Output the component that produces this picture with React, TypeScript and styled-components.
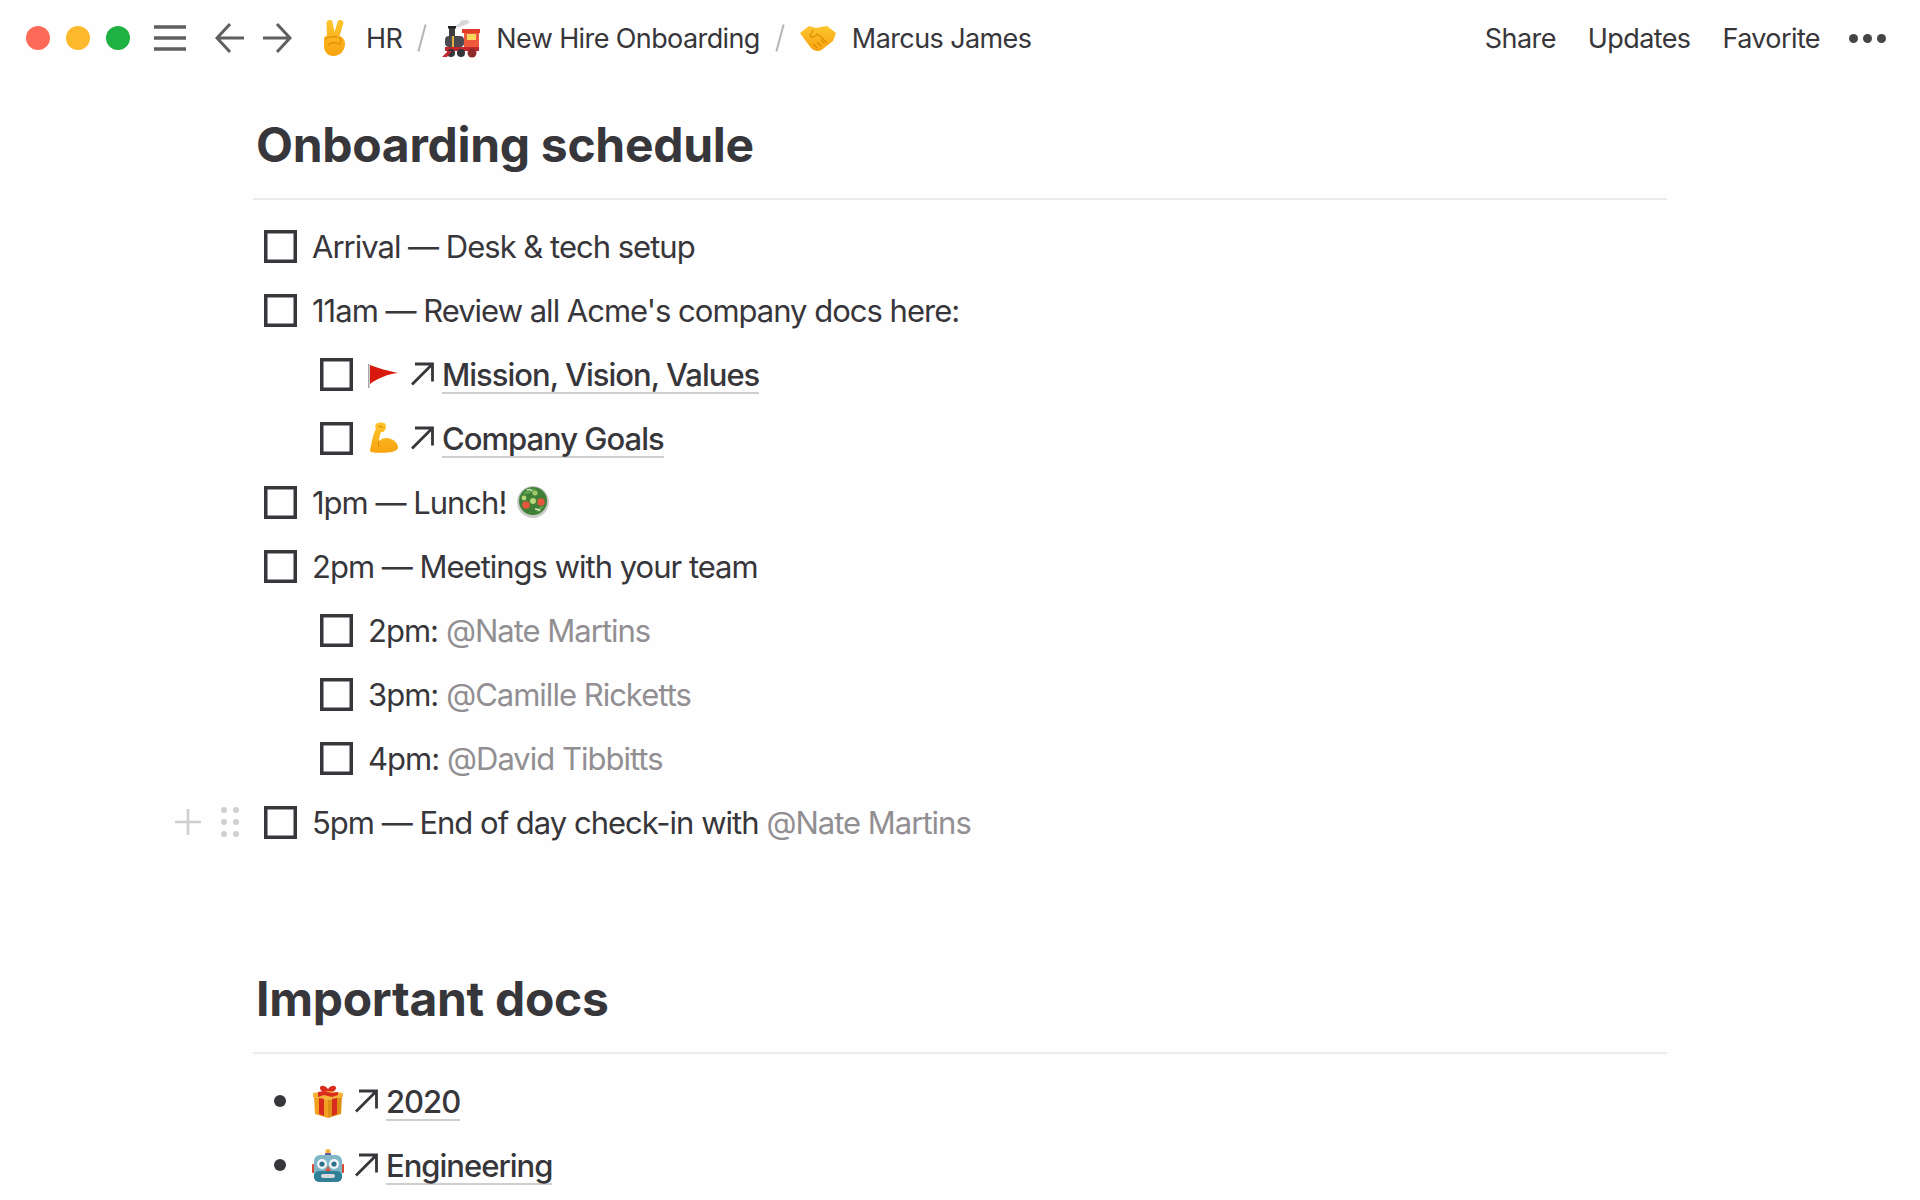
import * as React from "react";
import styled, { createGlobalStyle } from "styled-components";

const GlobalStyle = createGlobalStyle`
  html, body {
    margin: 0;
    padding: 0;
    background: #fffefe;
    overflow: hidden;
  }
  body {
    font-family: Inter, "Liberation Sans", sans-serif;
    color: #37363a;
  }
`;

const Page = styled.div`
  width: 1920px;
  height: 1200px;
  overflow: hidden;
`;

const TopBar = styled.header`
  height: 76px;
  display: flex;
  align-items: center;
  padding: 0 34px 0 26px;
  font-size: 27px;
  letter-spacing: -0.6px;
`;

const TrafficLights = styled.div`
  display: flex;
  gap: 16px;
  margin-right: 23px;
`;

const Light = styled.span<{ $color: string }>`
  width: 24px;
  height: 24px;
  border-radius: 50%;
  background: ${(p) => p.$color};
`;

const NavIcon = styled.svg<{ $gap?: number }>`
  display: block;
  flex: none;
  margin-right: ${(p) => p.$gap ?? 0}px;
  color: #5f5f62;
`;

const Crumb = styled.span`
  display: inline-flex;
  align-items: center;
  gap: 16px;
  white-space: nowrap;
`;

const Slash = styled.span`
  width: 2px;
  height: 28px;
  margin: 0 19px 0 19px;
  background: #b5b5b7;
  transform: rotate(15deg);
`;

const RightActions = styled.nav`
  margin-left: auto;
  display: flex;
  align-items: center;
  gap: 32px;
`;

const Dots = styled.span`
  display: flex;
  gap: 5px;
  margin-left: -3px;
`;

const Dot = styled.span`
  width: 9px;
  height: 9px;
  border-radius: 50%;
  background: #454548;
`;

const Content = styled.main`
  width: 1414px;
  margin-left: 253px;
`;

const Heading = styled.h1<{ $top: number }>`
  margin: ${(p) => p.$top}px 0 0;
  padding: 0 0 24px 3px;
  height: 59px;
  font-size: 48px;
  line-height: 59px;
  font-weight: 700;
  letter-spacing: -0.3px;
  box-sizing: content-box;
  border-bottom: 2px solid #ebebeb;
`;

const List = styled.ul<{ $top: number }>`
  list-style: none;
  margin: ${(p) => p.$top}px 0 0;
  padding: 0;
`;

const Row = styled.li<{ $indent?: boolean }>`
  position: relative;
  height: 64px;
  display: flex;
  align-items: center;
  padding-left: ${(p) => (p.$indent ? 67 : 11)}px;
  font-size: 31px;
  letter-spacing: -1px;
  white-space: nowrap;
`;

const CheckBox = styled.span`
  flex: none;
  width: 33px;
  height: 33px;
  box-sizing: border-box;
  border: 3px solid #37363a;
  box-shadow: inset 0 0 0 0.5px #37363a;
  margin-right: 15px;
`;

const Bullet = styled.span`
  flex: none;
  width: 12px;
  height: 12px;
  border-radius: 50%;
  margin: 0 26px 0 10px;
  background: #37363a;
`;

const Mention = styled.span`
  color: #918f92;
  margin-left: 8px;
`;

const PageLink = styled.span`
  font-weight: 500;
  padding-bottom: 1px;
  margin-top: 4px;
  border-bottom: 2px solid #cfcfd0;
  line-height: 32px;
`;

const LinkArrow = styled.svg`
  flex: none;
  display: block;
  margin: 0 8px 0 10px;
  color: #37363a;
`;

const InlineEmoji = styled.svg<{ $left?: number; $right?: number }>`
  flex: none;
  display: block;
  margin-left: ${(p) => p.$left ?? 0}px;
  margin-right: ${(p) => p.$right ?? 0}px;
`;

const BlockHandles = styled.div`
  position: absolute;
  left: -79px;
  top: 17px;
  display: flex;
  align-items: center;
  gap: 19px;
`;

/* nav drawings */
const Hamburger = () => (
  <NavIcon width="34" height="28" viewBox="0 0 34 28" $gap={28}>
    <path d="M1 3h32M1 14h32M1 25h32" stroke="currentColor" strokeWidth="3.6" fill="none" />
  </NavIcon>
);

const ArrowBack = () => (
  <NavIcon width="30" height="32" viewBox="0 0 30 32" $gap={17}>
    <path d="M29 16H3M15 2L2 16l13 14" stroke="currentColor" strokeWidth="3" fill="none" />
  </NavIcon>
);

const ArrowForward = () => (
  <NavIcon width="30" height="32" viewBox="0 0 30 32" $gap={28}>
    <path d="M1 16h26M15 2l13 14-13 14" stroke="currentColor" strokeWidth="3" fill="none" />
  </NavIcon>
);

const Arrow = () => (
  <LinkArrow width="24" height="24" viewBox="0 0 24 24">
    <path d="M2 22.5L22 2.5M5 2h17.5v17.5" stroke="currentColor" strokeWidth="2.8" fill="none" />
  </LinkArrow>
);

const Skin = ({ id }: { id: string }) => (
  <defs>
    <linearGradient id={id} x1="0" y1="0" x2="0" y2="1">
      <stop offset="0" stopColor="#fdc52e" />
      <stop offset="1" stopColor="#f8a30f" />
    </linearGradient>
  </defs>
);

/* emoji drawings */
const Peace = () => (
  <InlineEmoji width="30" height="38" viewBox="1 0 30 38">
    <Skin id="peace-skin" />
    <path
      d="M9 1.5c2-1 4-.5 4.5 1.5l2 10 3-10c.5-2 2.500-2.500 4.500-1.500 1.500.8 1.700 2 1.200 3.500L20.500 17c3 1 5.500 3.500 5.500 7.500 0 7-5 12.500-11.500 12.500C9 37 5 33 5 27v-7c0-2 1-3 3-3.500L7.500 5C7.300 3.500 7.700 2.200 9 1.500z"
      fill="url(#peace-skin)"
    />
    <path d="M6 20c3-2 8-3 13-2M9 26c3-2.500 7-3 11-1M20 18c2.500 2 2.500 5 0 8" stroke="#de8c06" strokeWidth="1.2" fill="none" />
  </InlineEmoji>
);

const Train = () => (
  <InlineEmoji width="38" height="42" viewBox="0 0 38 42">
    <path d="M14 10c0-3 3-2 4-5 3-3 7-2 9-1 2 2-2 3-4 4-3 1-6 3-9 2z" fill="#d8d8dc" />
    <rect x="7" y="11" width="6" height="8" fill="#3b3b40" />
    <rect x="6" y="9" width="8" height="2.5" fill="#222" />
    <rect x="3" y="19" width="19" height="11" rx="4" fill="#4a4a50" />
    <rect x="10" y="19" width="2" height="11" fill="#e0b040" />
    <rect x="22" y="14" width="15" height="16" fill="#f05a3c" />
    <rect x="20" y="12" width="18" height="4" fill="#e23b2a" />
    <rect x="25" y="17" width="9" height="6" fill="#f9d65c" />
    <rect x="3" y="30" width="34" height="4" fill="#c1272d" />
    <circle cx="9" cy="36" r="4" fill="#33333a" />
    <circle cx="19" cy="36" r="4" fill="#33333a" />
    <circle cx="30" cy="36" r="4.5" fill="#8e2b2b" />
    <path d="M0 40l6-6h4l-5 6z" fill="#c1272d" />
  </InlineEmoji>
);

const Handshake = () => (
  <InlineEmoji width="36" height="26" viewBox="0 0 36 26">
    <Skin id="shake-skin" />
    <path d="M0 8L9 1l7 2 5-1 6-1 9 7-3 8-9 7c-2 2-4 3-6 3-3 0-5-1-7-3L5 15z" fill="url(#shake-skin)" />
    <path d="M13 5l-3 6c2 2 5 1 7-2l3 2 7 7" stroke="#de8c06" strokeWidth="1.2" fill="none" />
    <path d="M13 19l4 4M17 17l4 4M21 15l3 3" stroke="#de8c06" strokeWidth="1.1" fill="none" />
  </InlineEmoji>
);

const Flag = () => (
  <InlineEmoji width="30" height="30" viewBox="0 0 30 30" $right={2}>
    <rect x="0" y="5" width="1.6" height="24" fill="#a9a9ad" />
    <path d="M2 6c8 3 18 6 28 8-10 1-20 5-28 11z" fill="#d9190f" />
  </InlineEmoji>
);

const Muscle = () => (
  <InlineEmoji width="32" height="36" viewBox="-2 -2 32 36">
    <Skin id="arm-skin" />
    <path
      d="M6 2C8 0 14 0 15.500 2c1 3 0 7-2.500 8h-2c-1 3-2 6-2 9 3-3 8-4 12-2 5 2 7 6 7 8 0 4-5 5-10 5.500-6 .5-13 .5-17-.5-1.500-1-1-3 0-6C2 18 4 10 6 7 5 5 5 3 6 2z"
      fill="url(#arm-skin)"
    />
    <path d="M8 4c2 0 4 .5 5 2M9 19c-1 2-1 4 0 6" stroke="#de8c06" strokeWidth="1.1" fill="none" />
  </InlineEmoji>
);

const Salad = () => (
  <InlineEmoji width="32" height="34" viewBox="0 0 32 34" $left={11}>
    <circle cx="16" cy="17" r="16" fill="#c9cdc8" />
    <circle cx="16" cy="16" r="14" fill="#3f7f36" />
    <path d="M6 9c3-5 9-6 13-5-2 3-8 6-13 5zM19 27c3 0 7-3 8-6-3 0-7 2-8 6z" fill="#5f9e4c" />
    <circle cx="9" cy="20" r="3.800" fill="#e4573d" />
    <circle cx="24" cy="17" r="3.800" fill="#e4573d" />
    <circle cx="16" cy="16" r="3" fill="#b6d77a" />
    <circle cx="7" cy="13" r="2.400" fill="#b6d77a" />
    <circle cx="18" cy="8" r="2.600" fill="#9ec766" />
    <path d="M10 5c2-1 4-1 5 1M18 24c2 0 4 0 5 2" stroke="#d7e6c4" strokeWidth="1.4" fill="none" />
  </InlineEmoji>
);

const Gift = () => (
  <InlineEmoji width="32" height="33" viewBox="0 0 32 33">
    <path d="M16 4c-3-4-8-4-8-1 0 2 2 4 8 5 6-1 8-3 8-5 0-3-5-3-8 1z" fill="#d92b20" />
    <path d="M1 8l15-2 15 2v4L16 15 1 12z" fill="#f5b335" />
    <path d="M2 12l14 3v18L3 29z" fill="#f2a11f" />
    <path d="M30 12l-14 3v18l13-4z" fill="#dd8e14" />
    <path d="M7 13l5 1v17l-5-2zM25 13l-5 1v17l5-2z" fill="#d92b20" />
    <path d="M6 7l6-1 8 2 6-1 0 3-6 2-8-2-6 2z" fill="#d92b20" />
  </InlineEmoji>
);

const Robot = () => (
  <InlineEmoji width="32" height="33" viewBox="0 0 32 33">
    <circle cx="16" cy="2.500" r="2.500" fill="#f5b335" />
    <rect x="13" y="4" width="6" height="3" fill="#6a5aa8" />
    <rect x="0" y="15" width="3" height="9" rx="1" fill="#d9482f" />
    <rect x="29" y="15" width="3" height="9" rx="1" fill="#d9482f" />
    <rect x="2" y="6" width="28" height="27" rx="6" fill="#7fb6c8" />
    <rect x="2" y="22" width="28" height="11" rx="5" fill="#2f7f98" />
    <circle cx="10" cy="15" r="5" fill="#f2f6f7" />
    <circle cx="22" cy="15" r="5" fill="#f2f6f7" />
    <circle cx="10" cy="15" r="2.600" fill="#2e6f8a" />
    <circle cx="22" cy="15" r="2.600" fill="#2e6f8a" />
    <path d="M16 17l3 5h-6z" fill="#e0503a" />
    <rect x="9" y="25" width="14" height="4" rx="2" fill="#d4dade" />
  </InlineEmoji>
);

const Plus = () => (
  <svg width="28" height="28" viewBox="0 0 28 28">
    <path d="M14 1v26M1 14h26" stroke="#cfcfd1" strokeWidth="2.600" fill="none" />
  </svg>
);

const Grip = () => (
  <svg width="18" height="30" viewBox="0 0 18 30">
    {[3, 15, 27].flatMap((y) =>
      [3, 15].map((x) => <circle key={`${x}-${y}`} cx={x} cy={y} r="3" fill="#cfcfd1" />)
    )}
  </svg>
);

export default function App() {
  return (
    <Page>
      <GlobalStyle />
      <TopBar>
        <TrafficLights>
          <Light $color="#fd6a58" />
          <Light $color="#fdb92c" />
          <Light $color="#1fb141" />
        </TrafficLights>
        <Hamburger />
        <ArrowBack />
        <ArrowForward />
        <Crumb>
          <Peace />
          HR
        </Crumb>
        <Slash />
        <Crumb>
          <Train />
          New Hire Onboarding
        </Crumb>
        <Slash />
        <Crumb>
          <Handshake />
          Marcus James
        </Crumb>
        <RightActions>
          <span>Share</span>
          <span>Updates</span>
          <span>Favorite</span>
          <Dots>
            <Dot />
            <Dot />
            <Dot />
          </Dots>
        </RightActions>
      </TopBar>

      <Content>
        <Heading $top={39}>Onboarding schedule</Heading>
        <List $top={14}>
          <Row>
            <CheckBox />
            Arrival — Desk &amp; tech setup
          </Row>
          <Row>
            <CheckBox />
            11am — Review all Acme's company docs here:
          </Row>
          <Row $indent>
            <CheckBox />
            <Flag />
            <Arrow />
            <PageLink>Mission, Vision, Values</PageLink>
          </Row>
          <Row $indent>
            <CheckBox />
            <Muscle />
            <Arrow />
            <PageLink>Company Goals</PageLink>
          </Row>
          <Row>
            <CheckBox />
            1pm — Lunch!
            <Salad />
          </Row>
          <Row>
            <CheckBox />
            2pm — Meetings with your team
          </Row>
          <Row $indent>
            <CheckBox />
            2pm:
            <Mention>@Nate Martins</Mention>
          </Row>
          <Row $indent>
            <CheckBox />
            3pm:
            <Mention>@Camille Ricketts</Mention>
          </Row>
          <Row $indent>
            <CheckBox />
            4pm:
            <Mention>@David Tibbitts</Mention>
          </Row>
          <Row>
            <BlockHandles>
              <Plus />
              <Grip />
            </BlockHandles>
            <CheckBox />
            5pm — End of day check-in with
            <Mention>@Nate Martins</Mention>
          </Row>
        </List>

        <Heading $top={115}>Important docs</Heading>
        <List $top={15}>
          <Row>
            <Bullet />
            <Gift />
            <Arrow />
            <PageLink>2020</PageLink>
          </Row>
          <Row>
            <Bullet />
            <Robot />
            <Arrow />
            <PageLink>Engineering</PageLink>
          </Row>
        </List>
      </Content>
    </Page>
  );
}
